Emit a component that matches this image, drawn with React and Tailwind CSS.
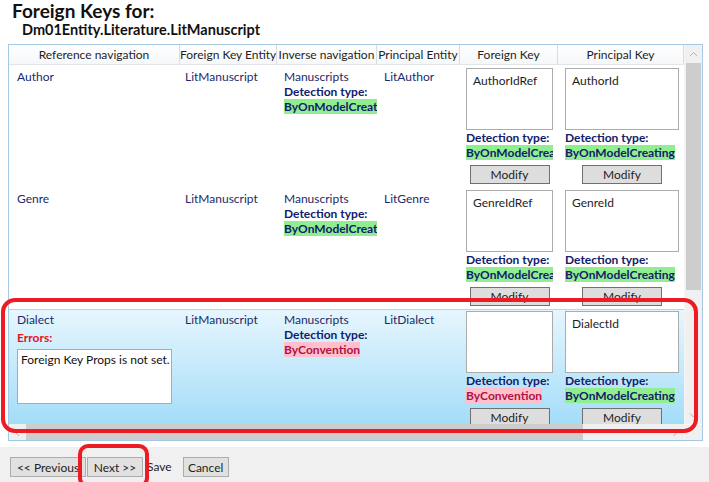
import React from "react";

const navy = "text-[#1b2a6b]";

function Tag({ ok, children }) {
  return (
    <span
      className={
        ok
          ? "bg-[#90ee90] font-bold text-[#10206a]"
          : "bg-[#ffc0cb] font-bold text-[#b01048]"
      }
    >
      {children}
    </span>
  );
}

function KeyBox({ width, value, ok, label }) {
  return (
    <div className="flex flex-col" style={{ width }}>
      <div className="h-[62px] border border-[#ababab] bg-white pl-[6px] pt-[4px] text-[#1e1e1e] leading-[15px]">
        {value}
      </div>
      <div className="font-bold text-[#10206a] whitespace-nowrap overflow-hidden leading-[15px]">
        Detection type:
      </div>
      <div className="whitespace-nowrap overflow-hidden leading-[15px]">
        <Tag ok={ok}>{label}</Tag>
      </div>
      <button className="mt-[5px] self-center w-[80px] h-[19px] shrink-0 bg-[#dddddd] border border-[#707070] text-[#1e1e1e] leading-[15px]">
        Modify
      </button>
    </div>
  );
}

function Row({ nav, entity, inverse, principal, fk, pk, fkOk, selected, errors }) {
  return (
    <div
      className={
        selected
          ? "flex h-[122px] shrink-0 border-t border-[#a8d8f3] bg-gradient-to-b from-[#e6f6fe] to-[#9fdbf8] pt-[1px]"
          : "flex h-[122px] shrink-0 pt-[3px]"
      }
    >
      <div className="w-[171px] shrink-0 pl-[8px]">
        <div className={`${navy} leading-[15px] pt-[1px]`}>{nav}</div>
        {errors && (
          <>
            <div className="mt-[3px] font-bold text-[#e5121e] leading-[15px]">Errors:</div>
            <div className="mt-[4px] w-[155px] h-[55px] border border-[#ababab] bg-white pl-[3px] pt-[2px] text-[#111] leading-[15px] whitespace-nowrap">
              {errors}
            </div>
          </>
        )}
      </div>
      <div className={`w-[97px] shrink-0 pl-[5px] pt-[1px] ${navy} leading-[15px]`}>{entity}</div>
      <div className="w-[100px] shrink-0 pl-[7px] pr-[5px] pt-[1px] leading-[15px] overflow-hidden">
        <div className={navy}>{inverse}</div>
        <div className="font-bold text-[#10206a] whitespace-nowrap">Detection type:</div>
        <div className="whitespace-nowrap">
          <Tag ok={fkOk}>{fkOk ? "ByOnModelCreating" : "ByConvention"}</Tag>
        </div>
      </div>
      <div className={`w-[83px] shrink-0 pl-[7px] pt-[1px] ${navy} leading-[15px]`}>{principal}</div>
      <div className="w-[98px] shrink-0 pl-[6px]">
        <KeyBox width={87} value={fk} ok={fkOk} label={fkOk ? "ByOnModelCreating" : "ByConvention"} />
      </div>
      <div className="w-[126px] shrink-0 pl-[7px]">
        <KeyBox width={114} value={pk} ok={true} label="ByOnModelCreating" />
      </div>
    </div>
  );
}

function Chevron({ dir }) {
  const d = {
    up: "M1 5 L4.5 1.5 L8 5",
    down: "M1 1.5 L4.5 5 L8 1.5",
    left: "M5 1 L1.5 4.5 L5 8",
    right: "M1.5 1 L5 4.5 L1.5 8",
  }[dir];
  const w = dir === "up" || dir === "down" ? 9 : 7;
  const h = dir === "up" || dir === "down" ? 7 : 9;
  return (
    <svg width={w} height={h} viewBox={`0 0 ${w} ${h}`}>
      <path d={d} fill="none" stroke="#b4b4b4" strokeWidth="1" />
    </svg>
  );
}

const headers = [
  ["Reference navigation", "w-[171px]"],
  ["Foreign Key Entity", "w-[97px]"],
  ["Inverse navigation", "w-[100px]"],
  ["Principal Entity", "w-[83px]"],
  ["Foreign Key", "w-[98px]"],
  ["Principal Key", "w-[126px]"],
];

export default function App() {
  return (
    <div className="relative w-[709px] h-[482px] bg-white flex flex-col overflow-hidden font-['Lato',sans-serif] text-[12px]">
      <div className="pl-[12px] pt-[0px] h-[22px] text-[19px] font-bold leading-[22px] text-[#111]">
        Foreign Keys for:
      </div>
      <div className="pl-[22px] h-[22px] text-[14.5px] font-bold leading-[16px] text-[#111]">
        Dm01Entity.Literature.LitManuscript
      </div>

      <div className="ml-[8px] w-[695px] h-[397px] shrink-0 border border-[#a3c9e4] flex">
        <div className="w-[675px] flex flex-col">
          <div className="flex h-[20px] shrink-0 border-b border-[#e3e4e8] bg-gradient-to-b from-white to-[#f6f7f9]">
            {headers.map(([t, w]) => (
              <div
                key={t}
                className={`${w} shrink-0 border-r border-[#dadce2] text-center text-[#1e1e1e] leading-[20px] whitespace-nowrap overflow-hidden`}
              >
                {t}
              </div>
            ))}
          </div>
          <div className="flex-1 overflow-hidden flex flex-col">
            <Row
              nav="Author"
              entity="LitManuscript"
              inverse="Manuscripts"
              principal="LitAuthor"
              fk="AuthorIdRef"
              pk="AuthorId"
              fkOk={true}
            />
            <Row
              nav="Genre"
              entity="LitManuscript"
              inverse="Manuscripts"
              principal="LitGenre"
              fk="GenreIdRef"
              pk="GenreId"
              fkOk={true}
            />
            <Row
              nav="Dialect"
              entity="LitManuscript"
              inverse="Manuscripts"
              principal="LitDialect"
              fk=""
              pk="DialectId"
              fkOk={false}
              selected
              errors="Foreign Key Props is not set."
            />
          </div>
          <div className="h-[16px] shrink-0 flex bg-[#f0f0f0]">
            <div className="w-[17px] flex items-center justify-center">
              <Chevron dir="left" />
            </div>
            <div className="w-[557px] bg-[#cdcdcd]" />
            <div className="flex-1" />
            <div className="w-[17px] flex items-center justify-center">
              <Chevron dir="right" />
            </div>
          </div>
        </div>
        <div className="w-[18px] flex flex-col bg-[#f0f0f0] border-l border-[#f6f6f6]">
          <div className="h-[18px] flex items-center justify-center">
            <Chevron dir="up" />
          </div>
          <div className="mx-[1px] h-[227px] bg-[#cdcdcd]" />
          <div className="flex-1" />
          <div className="h-[17px] flex items-center justify-center">
            <Chevron dir="down" />
          </div>
          <div className="h-[16px] border-t border-[#fafafa]" />
        </div>
      </div>

      <div className="mt-[6px] flex-1 bg-[#f0f0f0] flex items-start pt-[10px] pl-[10px] text-[#1e1e1e]">
        <button className="h-[20px] w-[76px] bg-[#e1e1e1] border border-[#adadad] leading-[17px]">
          &lt;&lt; Previous
        </button>
        <button className="ml-[1px] h-[20px] w-[56px] bg-[#e1e1e1] border border-[#adadad] leading-[17px]">
          Next &gt;&gt;
        </button>
        <span className="ml-[4px] leading-[20px]">Save</span>
        <button className="ml-[11px] h-[20px] w-[46px] bg-[#e1e1e1] border border-[#adadad] leading-[17px]">
          Cancel
        </button>
      </div>

      <div className="absolute left-[1px] top-[298px] w-[697px] h-[135px] border-[4px] border-[#ed1c24] rounded-[14px] pointer-events-none" />
      <div className="absolute left-[78px] top-[444px] w-[71px] h-[44px] border-[4px] border-[#ed1c24] rounded-[10px] pointer-events-none" />
    </div>
  );
}
